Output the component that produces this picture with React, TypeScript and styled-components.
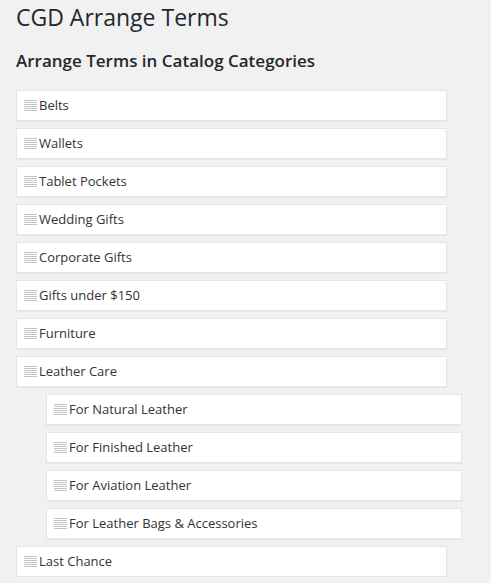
import React from "react";
import styled, { createGlobalStyle } from "styled-components";

const Global = createGlobalStyle`
  html, body { margin: 0; padding: 0; background: #f1f1f1; }
  body { font-family: "Open Sans", "Noto Sans", sans-serif; color: #444; }
`;

const Page = styled.div`
  padding: 3px 0 0 16px;
`;

const Title = styled.h1`
  margin: 0;
  font-size: 23px;
  line-height: 29px;
  font-weight: 400;
  color: #23282d;
`;

const Heading = styled.h2`
  margin: 17px 0 0;
  font-size: 17px;
  line-height: 24px;
  font-weight: 600;
  color: #23282d;
`;

const List = styled.ul<{ $nested?: boolean }>`
  list-style: none;
  margin: ${(p) => (p.$nested ? "0 0 0 30px" : "17px 0 0")};
  padding: 0;
  display: flex;
  flex-direction: column;
  gap: 7px;
`;

const Row = styled.div<{ $nested?: boolean }>`
  box-sizing: border-box;
  width: ${(p) => (p.$nested ? 416 : 431)}px;
  height: 31px;
  border: 1px solid #e5e5e5;
  box-shadow: 0 1px 1px rgba(0, 0, 0, 0.04);
  background: #fff;
  display: flex;
  align-items: center;
  padding-left: 7px;
  gap: 2px;
  font-size: 13px;
  line-height: 29px;
  color: #333;
`;

const Item = styled.li`
  display: flex;
  flex-direction: column;
  gap: 7px;
`;

const Handle = () => (
  <svg width="13" height="12" viewBox="0 0 13 12" style={{ flex: "none" }}>
    {[0, 2, 4, 6, 8, 10].map((y) => (
      <rect key={y} x="0" y={y} width="13" height="1" fill="#c4c4c4" />
    ))}
  </svg>
);

type Term = { name: string; children?: string[] };

const terms: Term[] = [
  { name: "Belts" },
  { name: "Wallets" },
  { name: "Tablet Pockets" },
  { name: "Wedding Gifts" },
  { name: "Corporate Gifts" },
  { name: "Gifts under $150" },
  { name: "Furniture" },
  {
    name: "Leather Care",
    children: [
      "For Natural Leather",
      "For Finished Leather",
      "For Aviation Leather",
      "For Leather Bags & Accessories",
    ],
  },
  { name: "Last Chance" },
];

export default function App() {
  return (
    <Page>
      <Global />
      <Title>CGD Arrange Terms</Title>
      <Heading>Arrange Terms in Catalog Categories</Heading>
      <List>
        {terms.map((t) => (
          <Item key={t.name}>
            <Row>
              <Handle />
              <span>{t.name}</span>
            </Row>
            {t.children && (
              <List $nested>
                {t.children.map((c) => (
                  <Item key={c}>
                    <Row $nested>
                      <Handle />
                      <span>{c}</span>
                    </Row>
                  </Item>
                ))}
              </List>
            )}
          </Item>
        ))}
      </List>
    </Page>
  );
}
